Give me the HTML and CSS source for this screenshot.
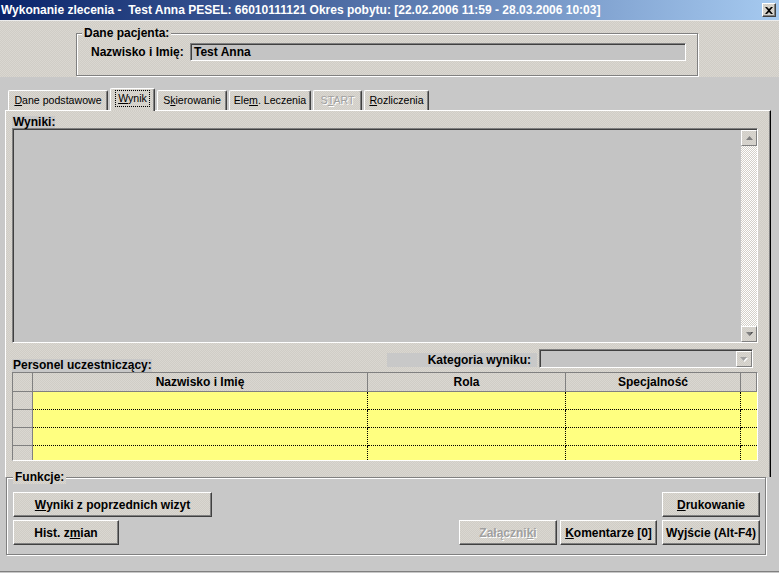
FILE: index.html
```html
<!DOCTYPE html>
<html lang="pl">
<head>
<meta charset="utf-8">
<title>Wykonanie zlecenia</title>
<link rel="stylesheet" href="styles.css">
</head>
<body>
<div class="window">
  <div class="titlebar">
    <span class="title">Wykonanie zlecenia -  Test Anna PESEL: 66010111121 Okres pobytu: [22.02.2006 11:59 - 28.03.2006 10:03]</span>
    <span class="close texture">
      <svg width="8" height="7" viewBox="0 0 8 7"><path d="M0 0h2l2 2 2-2h2L5 3.5 8 7H6L4 5 2 7H0l3-3.5z" fill="#000"/></svg>
    </span>
  </div>

  <div class="header texture">
    <fieldset class="group patient">
      <legend class="texture">Dane pacjenta:</legend>
      <div class="field-row">
        <span class="field-label">Nazwisko i Imię:</span>
        <div class="input">Test Anna</div>
      </div>
    </fieldset>
  </div>

  <div class="tabs">
    <div class="tab t-dane texture"><u>D</u>ane podstawowe</div>
    <div class="tab t-wynik active texture"><span class="focus"><u>W</u>ynik</span></div>
    <div class="tab t-skier texture">S<u>k</u>ierowanie</div>
    <div class="tab t-elem texture">Ele<u>m</u>. Leczenia</div>
    <div class="tab t-start disabled texture">S<u>T</u>ART</div>
    <div class="tab t-rozl texture"><u>R</u>ozliczenia</div>
  </div>

  <div class="panel texture">
    <div class="caption caption-wyniki">Wyniki:</div>
    <div class="memo">
      <div class="scrollbar">
        <div class="sb-btn texture">
          <svg width="7" height="4" viewBox="0 0 7 4"><path d="M3.5 0L7 4H0z" fill="#808080"/></svg>
        </div>
        <div class="sb-track"></div>
        <div class="sb-btn texture">
          <svg width="7" height="4" viewBox="0 0 7 4"><path d="M0 0h7L3.5 4z" fill="#808080"/><path d="M3.5 4L7 0H5.5z" fill="#404040"/></svg>
        </div>
      </div>
    </div>

    <div class="mid-row">
      <div class="caption caption-personel">Personel uczestniczący:</div>
      <div class="kat-label">Kategoria wyniku:</div>
      <div class="combo">
        <div class="combo-btn texture">
          <svg width="8" height="5" viewBox="0 0 8 5"><path d="M1 1h7L4.5 5z" fill="#fff"/><path d="M0 0h7L3.5 4z" fill="#a0a0a0"/></svg>
        </div>
      </div>
    </div>

    <div class="grid">
      <div class="ind hd texture"></div>
      <div class="hc texture">Nazwisko i Imię</div>
      <div class="hc texture">Rola</div>
      <div class="hc texture">Specjalność</div>
      <div class="hc texture"></div>

      <div class="ind texture"></div><div class="cell"></div><div class="cell"></div><div class="cell"></div><div class="cell last"></div>
      <div class="ind texture"></div><div class="cell"></div><div class="cell"></div><div class="cell"></div><div class="cell last"></div>
      <div class="ind texture"></div><div class="cell"></div><div class="cell"></div><div class="cell"></div><div class="cell last"></div>
      <div class="ind end texture"></div><div class="cell end"></div><div class="cell end"></div><div class="cell end"></div><div class="cell last end"></div>
    </div>
  </div>

  <fieldset class="group funcs">
    <legend class="texture">Funkcje:</legend>
    <div class="btn-row">
      <div class="btn texture b-prev"><u>W</u>yniki z poprzednich wizyt</div>
      <div class="btn texture b-druk"><u>D</u>rukowanie</div>
    </div>
    <div class="btn-row">
      <div class="btn texture b-hist">Hist. z<u>m</u>ian</div>
      <div class="right-group">
        <div class="btn texture b-zal disabled">Załączni<u>k</u>i</div>
        <div class="btn texture b-kom"><u>K</u>omentarze [0]</div>
        <div class="btn texture b-wyj">Wyjście (Alt-F4)</div>
      </div>
    </div>
  </fieldset>
</div>
</body>
</html>
```
FILE: styles.css
```css
* { box-sizing: border-box; }
html, body { margin: 0; padding: 0; }
body {
  width: 779px;
  height: 573px;
  overflow: hidden;
  background: #c8c8c8;
  font-family: "Liberation Sans", Arial, sans-serif;
  font-size: 12px;
  color: #000;
}
u { text-decoration: underline; text-underline-offset: 1px; }

.texture {
  background-color: #d5d2cb;
  background-image: repeating-conic-gradient(#dad7d1 0 25%, #d0cdc6 0 50%);
  background-size: 2px 2px;
}

.window {
  height: 572px;
  display: flex;
  flex-direction: column;
  border-bottom: 1px solid #808080;
}

/* title bar */
.titlebar {
  height: 20px;
  flex: none;
  display: flex;
  align-items: center;
  justify-content: space-between;
  padding: 0 3px 0 1px;
  background: linear-gradient(to right, #0a246a, #a6caf0);
}
.title {
  color: #fff;
  font-weight: bold;
  font-size: 12px;
  white-space: pre;
}
.close {
  width: 14px;
  height: 14px;
  display: flex;
  align-items: center;
  justify-content: center;
  border: 1px solid;
  border-color: #fff #404040 #404040 #fff;
  box-shadow: inset -1px -1px 0 #808080;
}

/* header */
.header {
  height: 57px;
  flex: none;
  border-top: 1px solid #ececec;
  padding: 5px 0 0 76px;
}
.group {
  margin: 0;
  padding: 0;
  min-width: 0;
  border: 1px solid #808080;
  box-shadow: 1px 1px 0 #fff, inset 1px 1px 0 #fff;
}
.group legend {
  padding: 0 2px;
  font-weight: bold;
  line-height: 14px;
  font-size: 12px;
}
.patient {
  width: 622px;
  padding: 0 11px 14px 14px;
}
.patient legend { margin-left: -9px; }
.field-row {
  display: flex;
  align-items: center;
  margin-top: 3px;
}
.field-label {
  width: 99px;
  font-weight: bold;
}
.input {
  flex: 1;
  height: 18px;
  background: #c4c4c4;
  border-top: 1px solid #808080;
  border-left: 1px solid #808080;
  border-right: 1px solid #fff;
  border-bottom: 1px solid #fff;
  box-shadow: inset 1px 1px 0 #404040;
  font-weight: bold;
  padding: 1px 0 0 3px;
  line-height: 15px;
}

/* tabs */
.tabs {
  height: 33px;
  flex: none;
  display: flex;
  align-items: flex-end;
  padding: 11px 0 0 8px;
  position: relative;
  z-index: 1;
}
.tab {
  height: 20px;
  margin-right: 2px;
  padding: 0;
  text-align: center;
  font-size: 10.6px;
  line-height: 19px;
  border-top: 1px solid #fff;
  border-left: 1px solid #fff;
  border-right: 1px solid #404040;
  box-shadow: inset -1px 0 0 #808080;
  border-radius: 2px 2px 0 0;
  white-space: nowrap;
}
.t-dane { width: 100px; }
.t-wynik { width: 45px; }
.t-skier { width: 70px; }
.t-elem { width: 82px; }
.t-start { width: 49px; }
.t-rozl { width: 65px; }
.tab.active {
  height: 23px;
  margin-bottom: -1px;
  line-height: 19px;
}
.tab.active .focus {
  display: inline-block;
  outline: 1px dotted #000;
  outline-offset: 0;
  padding: 0 2px;
  line-height: 15px;
  margin-top: 2px;
}
.tab.disabled {
  color: #a0a0a0;
  text-shadow: 1px 1px 0 #fff;
}

/* panel */
.panel {
  flex: none;
  margin-left: 5px;
  width: 766px;
  height: 367px;
  border-top: 1px solid #fff;
  border-left: 1px solid #fff;
  border-right: 1px solid #000;
  box-shadow: inset -1px 0 0 #808080;
  padding: 5px 0 0 6px;
}
.caption {
  font-weight: bold;
  background: #c8c8c8;
  line-height: 12px;
  height: 12px;
  padding-left: 1px;
  white-space: nowrap;
}
.caption-wyniki { width: 43px; }
.caption-personel { width: 140px; height: 13px; line-height: 13px; align-self: flex-end; }

.memo {
  width: 746px;
  height: 215px;
  background: #c4c4c4;
  border-top: 1px solid #808080;
  border-left: 1px solid #808080;
  border-right: 1px solid #fff;
  border-bottom: 1px solid #fff;
  box-shadow: inset 1px 1px 0 #404040;
  padding-top: 1px;
  display: flex;
  justify-content: flex-end;
}
.scrollbar {
  width: 16px;
  display: flex;
  flex-direction: column;
}
.sb-btn {
  height: 16px;
  flex: none;
  display: flex;
  align-items: center;
  justify-content: center;
  border: 1px solid;
  border-color: #fff #808080 #808080 #fff;
}
.sb-track {
  flex: 1;
  background-image: repeating-conic-gradient(#ffffff 0 25%, #d4d0c8 0 50%);
  background-size: 2px 2px;
}

.mid-row {
  height: 29px;
  width: 746px;
  display: flex;
  align-items: flex-start;
  padding-right: 5px;
}
.kat-label {
  margin-left: auto;
  margin-top: 10px;
  width: 150px;
  height: 14px;
  line-height: 14px;
  background: #c8c8c8;
  font-weight: bold;
  text-align: right;
  padding-right: 6px;
}
.combo {
  margin-left: 2px;
  margin-top: 6px;
  width: 214px;
  height: 19px;
  background: #c4c4c4;
  border-top: 1px solid #808080;
  border-left: 1px solid #808080;
  border-right: 1px solid #fff;
  border-bottom: 1px solid #fff;
  box-shadow: inset 1px 1px 0 #404040;
  display: flex;
  justify-content: flex-end;
  padding: 1px 0 0 0;
}
.combo-btn {
  width: 16px;
  height: 16px;
  display: flex;
  align-items: center;
  justify-content: center;
  border: 1px solid;
  border-color: #fff #808080 #808080 #fff;
}

/* grid */
.grid {
  width: 746px;
  height: 89px;
  display: grid;
  grid-template-columns: 20px 335px 198px 175px 1fr;
  grid-template-rows: 19px 18px 18px 18px 14px;
  border-top: 1px solid #808080;
  border-left: 1px solid #808080;
  border-right: 1px solid #fff;
  border-bottom: 1px solid #fff;
  overflow: hidden;
}
.ind {
  border-right: 1px solid #808080;
  border-bottom: 1px solid #808080;
}
.hc {
  border-right: 1px solid #808080;
  border-bottom: 1px solid #808080;
  font-weight: bold;
  text-align: center;
  line-height: 18px;
}
.hc:last-child { border-right: 0; }
.cell {
  background: #ffff80;
  border-right: 1px dotted #000;
  border-bottom: 1px dotted #000;
}
.cell.last { border-right: 0; }
.cell.end, .ind.end { border-bottom: 0; }

/* functions */
.funcs {
  flex: none;
  margin-top: -7px;
  margin-left: 6px;
  width: 760px;
  padding: 8px 5px 9px 6px;
}
.funcs legend { margin-left: 0; }
.btn-row {
  display: flex;
  justify-content: space-between;
  height: 25px;
}
.btn-row + .btn-row { margin-top: 3px; }
.right-group { display: flex; }
.btn {
  height: 25px;
  display: flex;
  align-items: center;
  justify-content: center;
  font-weight: bold;
  white-space: nowrap;
  border: 1px solid;
  border-color: #fff #404040 #404040 #fff;
  box-shadow: inset -1px -1px 0 #808080;
}
.b-prev { width: 199px; }
.b-druk { width: 98px; }
.b-hist { width: 106px; }
.b-zal { width: 98px; margin-right: 3px; }
.b-kom { width: 97px; margin-right: 5px; }
.b-wyj { width: 98px; }
.btn.disabled {
  color: #a0a0a0;
  text-shadow: 1px 1px 0 #fff;
}
```
